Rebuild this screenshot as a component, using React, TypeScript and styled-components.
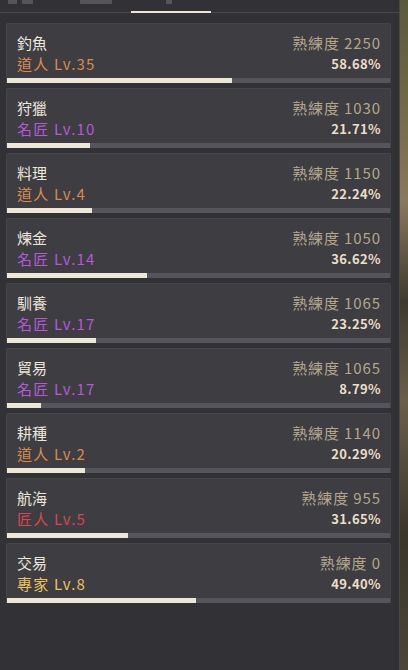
import React from "react";
import styled, { createGlobalStyle } from "styled-components";

type Skill = {
  name: string;
  rank: string;
  level: number;
  mastery: number;
  percent: number;
};

const RANK_COLORS: Record<string, string> = {
  道人: "#d98a4c",
  名匠: "#b55ad6",
  匠人: "#d9464d",
  專家: "#ecc35f",
};

const SKILLS: Skill[] = [
  { name: "釣魚", rank: "道人", level: 35, mastery: 2250, percent: 58.68 },
  { name: "狩獵", rank: "名匠", level: 10, mastery: 1030, percent: 21.71 },
  { name: "料理", rank: "道人", level: 4, mastery: 1150, percent: 22.24 },
  { name: "煉金", rank: "名匠", level: 14, mastery: 1050, percent: 36.62 },
  { name: "馴養", rank: "名匠", level: 17, mastery: 1065, percent: 23.25 },
  { name: "貿易", rank: "名匠", level: 17, mastery: 1065, percent: 8.79 },
  { name: "耕種", rank: "道人", level: 2, mastery: 1140, percent: 20.29 },
  { name: "航海", rank: "匠人", level: 5, mastery: 955, percent: 31.65 },
  { name: "交易", rank: "專家", level: 8, mastery: 0, percent: 49.4 },
];

const GlobalStyle = createGlobalStyle`
  html, body {
    margin: 0;
    padding: 0;
    background: #2b2a26;
  }
  body {
    font-family: "Noto Sans CJK TC", "Noto Sans", sans-serif;
  }
`;

const Screen = styled.div`
  display: flex;
  width: 408px;
  height: 670px;
  overflow: hidden;
`;

const Panel = styled.div`
  width: 400px;
  height: 100%;
  background: #323236;
  display: flex;
  flex-direction: column;
  border-right: 1px solid #4a4943;
  box-sizing: border-box;
`;

const Scenery = styled.div`
  flex: 1;
  background: linear-gradient(
    180deg,
    #5a5a3a 0%,
    #6b6540 12%,
    #8a7a5a 30%,
    #3d3a30 45%,
    #6a5f48 60%,
    #3a362c 80%,
    #4a4536 100%
  );
`;

const TabBar = styled.div`
  position: relative;
  height: 12px;
  border-bottom: 1px solid #48484c;
  box-sizing: content-box;
`;

const TabStub = styled.div<{ $left: number; $width: number }>`
  position: absolute;
  top: 0;
  left: ${(p) => p.$left}px;
  width: ${(p) => p.$width}px;
  height: 4px;
  background: #55555a;
  border-radius: 0 0 1px 1px;
`;

const TabUnderline = styled.div`
  position: absolute;
  bottom: -1px;
  left: 131px;
  width: 80px;
  height: 2px;
  background: #efe3d3;
`;

const List = styled.div`
  display: flex;
  flex-direction: column;
  gap: 5px;
  padding: 10px 8px 0 6px;
`;

const Card = styled.div`
  height: 60px;
  display: flex;
  flex-direction: column;
  background: #3d3d42;
  border: 1px solid #45454a;
  border-bottom: none;
  border-radius: 2px 2px 0 0;
  box-sizing: border-box;
  overflow: hidden;
`;

const CardBody = styled.div`
  flex: 1;
  display: flex;
  justify-content: space-between;
  padding: 8px 9px 0 10px;
`;

const Column = styled.div<{ $align: "left" | "right" }>`
  display: flex;
  flex-direction: column;
  align-items: ${(p) => (p.$align === "left" ? "flex-start" : "flex-end")};
`;

const Name = styled.div`
  font-size: 15px;
  line-height: 21px;
  color: #ebe7dd;
`;

const Rank = styled.div<{ $color: string }>`
  font-size: 15px;
  line-height: 21px;
  color: ${(p) => p.$color};
  letter-spacing: 1.2px;
`;

const Mastery = styled.div`
  font-size: 15px;
  line-height: 21px;
  color: #b4a68b;
  letter-spacing: 0.9px;
`;

const Percent = styled.div`
  font-size: 13px;
  line-height: 21px;
  font-weight: 700;
  color: #ecdfc6;
  letter-spacing: 0.4px;
`;

const Track = styled.div`
  height: 5px;
  background: #55555b;
`;

const Fill = styled.div`
  height: 100%;
  background: #ece7d7;
`;

const SkillCard = ({ skill }: { skill: Skill }) => (
  <Card>
    <CardBody>
      <Column $align="left">
        <Name>{skill.name}</Name>
        <Rank $color={RANK_COLORS[skill.rank]}>
          {skill.rank} Lv.{skill.level}
        </Rank>
      </Column>
      <Column $align="right">
        <Mastery>熟練度 {skill.mastery}</Mastery>
        <Percent>{skill.percent.toFixed(2)}%</Percent>
      </Column>
    </CardBody>
    <Track>
      <Fill style={{ width: `${skill.percent}%` }} />
    </Track>
  </Card>
);

const App = () => (
  <>
    <GlobalStyle />
    <Screen>
      <Panel>
        <TabBar>
          <TabStub $left={8} $width={9} />
          <TabStub $left={22} $width={11} />
          <TabStub $left={80} $width={32} />
          <TabStub $left={166} $width={6} />
          <TabUnderline />
        </TabBar>
        <List>
          {SKILLS.map((s) => (
            <SkillCard key={s.name} skill={s} />
          ))}
        </List>
      </Panel>
      <Scenery />
    </Screen>
  </>
);

export default App;
